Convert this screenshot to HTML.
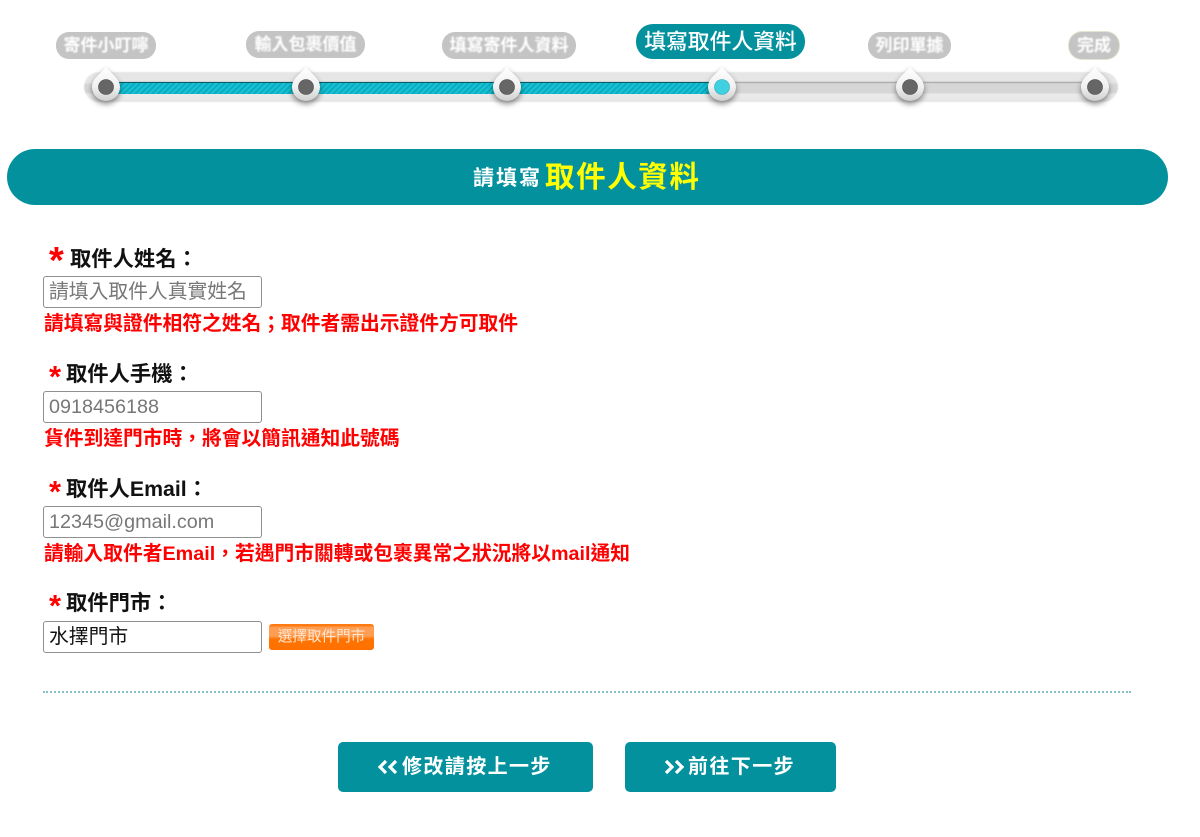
<!DOCTYPE html>
<html lang="zh-Hant"><head><meta charset="utf-8"><title>填寫取件人資料</title>
<style>
html,body{margin:0;padding:0;background:#fff;}
body{width:1200px;height:837px;position:relative;overflow:hidden;font-family:"Liberation Sans","Noto Sans CJK TC",sans-serif;}
.a{position:absolute;white-space:nowrap;}
.pill{position:absolute;height:27px;border-radius:13px;background:#c4c4c4;}
.pt{position:absolute;height:27px;line-height:27px;color:#fff;font-size:17px;font-weight:700;text-align:center;white-space:nowrap;filter:blur(.7px);}
.track{position:absolute;left:84px;top:72px;width:1034px;height:30px;border-radius:15px;background:linear-gradient(#e6e6e6 0,#e6e6e6 11px,#d6d6d6 12px,#d6d6d6 21px,#ececec 22px,#e6e6e6 100%);filter:blur(.5px);}
.line{position:absolute;left:110px;top:82px;width:980px;height:1px;background:#8a8c8c;filter:blur(.4px);}
.fill{position:absolute;left:105px;top:82px;width:618px;height:12px;background:repeating-linear-gradient(135deg,#08adc1 0 2px,#1cc0d2 2px 4px);border-top:1px solid #06606a;box-sizing:border-box;}
.knob{position:absolute;top:64px;width:32px;height:40px;overflow:visible;filter:blur(.3px);}
.lab{position:absolute;left:66px;font-size:21.3px;line-height:30px;font-weight:700;color:#111;white-space:nowrap;}
.star{position:absolute;color:#f00;font-weight:700;font-family:"Liberation Sans",sans-serif;line-height:40px;}
.inp{position:absolute;left:43px;width:219px;height:32px;box-sizing:border-box;border:1px solid #8f8f8f;border-radius:3px;background:#fff;padding-left:5px;font-size:19.8px;line-height:31px;color:#777;white-space:nowrap;overflow:hidden;}
.note{position:absolute;left:44px;font-size:19.75px;line-height:28px;font-weight:700;color:#f00;white-space:nowrap;}
.btn{position:absolute;top:742px;height:50px;background:#03919e;border-radius:5px;}
.bt{position:absolute;top:742px;color:#fff;font-size:20px;font-weight:700;line-height:50px;letter-spacing:1.4px;white-space:nowrap;}
.chev{position:absolute;top:759px;width:24px;height:16px;}
</style></head><body>
<div class="pill" style="left:56px;top:32px;width:100px;"></div><div class="pt" style="left:56px;top:32px;width:100px;">寄件小叮嚀</div>
<div class="pill" style="left:246px;top:31px;width:119px;"></div><div class="pt" style="left:246px;top:31px;width:119px;">輸入包裹價值</div>
<div class="pill" style="left:442px;top:32px;width:134px;"></div><div class="pt" style="left:442px;top:32px;width:134px;">填寫寄件人資料</div>
<div class="a" style="left:636px;top:24px;width:169px;height:35px;line-height:35px;border-radius:17px;background:#03919e;color:#fff;font-size:21.8px;font-weight:500;text-align:center;">填寫取件人資料</div>
<div class="pill" style="left:868px;top:32px;width:83px;"></div><div class="pt" style="left:868px;top:32px;width:83px;">列印單據</div>
<div class="pill" style="left:1069px;top:32px;width:50px;box-shadow:0 0 0 1px #dfe6cf;"></div><div class="pt" style="left:1069px;top:32px;width:50px;">完成</div>
<div class="track"></div><div class="line"></div><div class="fill"></div>
<svg width="0" height="0" style="position:absolute"><defs>
<linearGradient id="kg" x1="0" y1="0" x2="0" y2="1"><stop offset="0" stop-color="#ffffff"/><stop offset=".6" stop-color="#f0f0f0"/><stop offset="1" stop-color="#cfcfcf"/></linearGradient>
</defs></svg>
<svg class="knob" style="left:90px" viewBox="0 0 32 40"><path d="M16 2C18 8 30 13 30 23A14 14 0 0 1 2 23C2 13 14 8 16 2Z" fill="url(#kg)" style="filter:drop-shadow(0 3px 3px rgba(0,0,0,.45))"/><circle cx="16" cy="23" r="7.5" fill="#666" stroke="#444" stroke-width=".6"/></svg>
<svg class="knob" style="left:290px" viewBox="0 0 32 40"><path d="M16 2C18 8 30 13 30 23A14 14 0 0 1 2 23C2 13 14 8 16 2Z" fill="url(#kg)" style="filter:drop-shadow(0 3px 3px rgba(0,0,0,.45))"/><circle cx="16" cy="23" r="7.5" fill="#666" stroke="#444" stroke-width=".6"/></svg>
<svg class="knob" style="left:491px" viewBox="0 0 32 40"><path d="M16 2C18 8 30 13 30 23A14 14 0 0 1 2 23C2 13 14 8 16 2Z" fill="url(#kg)" style="filter:drop-shadow(0 3px 3px rgba(0,0,0,.45))"/><circle cx="16" cy="23" r="7.5" fill="#666" stroke="#444" stroke-width=".6"/></svg>
<svg class="knob" style="left:706px" viewBox="0 0 32 40"><path d="M16 2C18 8 30 13 30 23A14 14 0 0 1 2 23C2 13 14 8 16 2Z" fill="url(#kg)" style="filter:drop-shadow(0 3px 3px rgba(0,0,0,.45))"/><circle cx="16" cy="23" r="7.5" fill="#3fd0e2" stroke="#2aa6b6" stroke-width=".6"/></svg>
<svg class="knob" style="left:894px" viewBox="0 0 32 40"><path d="M16 2C18 8 30 13 30 23A14 14 0 0 1 2 23C2 13 14 8 16 2Z" fill="url(#kg)" style="filter:drop-shadow(0 3px 3px rgba(0,0,0,.45))"/><circle cx="16" cy="23" r="7.5" fill="#666" stroke="#444" stroke-width=".6"/></svg>
<svg class="knob" style="left:1079px" viewBox="0 0 32 40"><path d="M16 2C18 8 30 13 30 23A14 14 0 0 1 2 23C2 13 14 8 16 2Z" fill="url(#kg)" style="filter:drop-shadow(0 3px 3px rgba(0,0,0,.45))"/><circle cx="16" cy="23" r="7.5" fill="#666" stroke="#444" stroke-width=".6"/></svg>

<div class="a" style="left:7px;top:149px;width:1161px;height:56px;border-radius:28px;background:#03919e;"></div>
<div class="a" style="left:473px;top:161px;height:36px;line-height:36px;color:#fff;font-size:21px;font-weight:700;letter-spacing:2px;">請填寫</div>
<div class="a" style="left:545px;top:156px;height:44px;line-height:44px;color:#ff0;font-size:29.5px;font-weight:700;letter-spacing:1.6px;">取件人資料</div>

<div class="star" style="left:49px;top:241px;font-size:38px;">*</div>
<div class="lab" style="left:70px;top:244px;">取件人姓名：</div>
<div class="inp" style="top:276px;">請填入取件人真實姓名</div>
<div class="note" style="top:310px;">請填寫與證件相符之姓名；取件者需出示證件方可取件</div>

<div class="star" style="left:49px;top:357px;font-size:31px;">*</div>
<div class="lab" style="top:359px;">取件人手機：</div>
<div class="inp" style="top:391px;">0918456188</div>
<div class="note" style="top:425px;">貨件到達門市時，將會以簡訊通知此號碼</div>

<div class="star" style="left:49px;top:472px;font-size:31px;">*</div>
<div class="lab" style="top:474px;">取件人Email：</div>
<div class="inp" style="top:506px;">12345@gmail.com</div>
<div class="note" style="top:540px;">請輸入取件者Email，若遇門市關轉或包裹異常之狀況將以mail通知</div>

<div class="star" style="left:49px;top:586px;font-size:31px;">*</div>
<div class="lab" style="top:588px;">取件門市：</div>
<div class="inp" style="top:621px;color:#111;">水擇門市</div>
<div class="a" style="left:269px;top:624px;width:105px;height:26px;line-height:27px;border-radius:3px;background:linear-gradient(#ff7a10 0,#ff7a10 2px,#ff9d52 3px,#ff9d52 12px,#ff7300 15px,#ff7000);color:#ffe6d0;font-size:14.6px;text-align:center;">選擇取件門市</div>

<div class="a" style="left:43px;top:691px;width:1088px;height:0;border-top:2px dotted #86bfc5;"></div>

<div class="btn" style="left:338px;width:255px;"></div>
<svg class="chev" style="left:377px" viewBox="0 0 24 16"><path d="M9 2L3 8L9 14M19 2L13 8L19 14" fill="none" stroke="#fff" stroke-width="3.2"/></svg>
<div class="bt" style="left:402px;">修改請按上一步</div>
<div class="btn" style="left:625px;width:211px;"></div>
<svg class="chev" style="left:663px" viewBox="0 0 24 16"><path d="M3 2L9 8L3 14M13 2L19 8L13 14" fill="none" stroke="#fff" stroke-width="3.2"/></svg>
<div class="bt" style="left:688px;">前往下一步</div>
</body></html>
